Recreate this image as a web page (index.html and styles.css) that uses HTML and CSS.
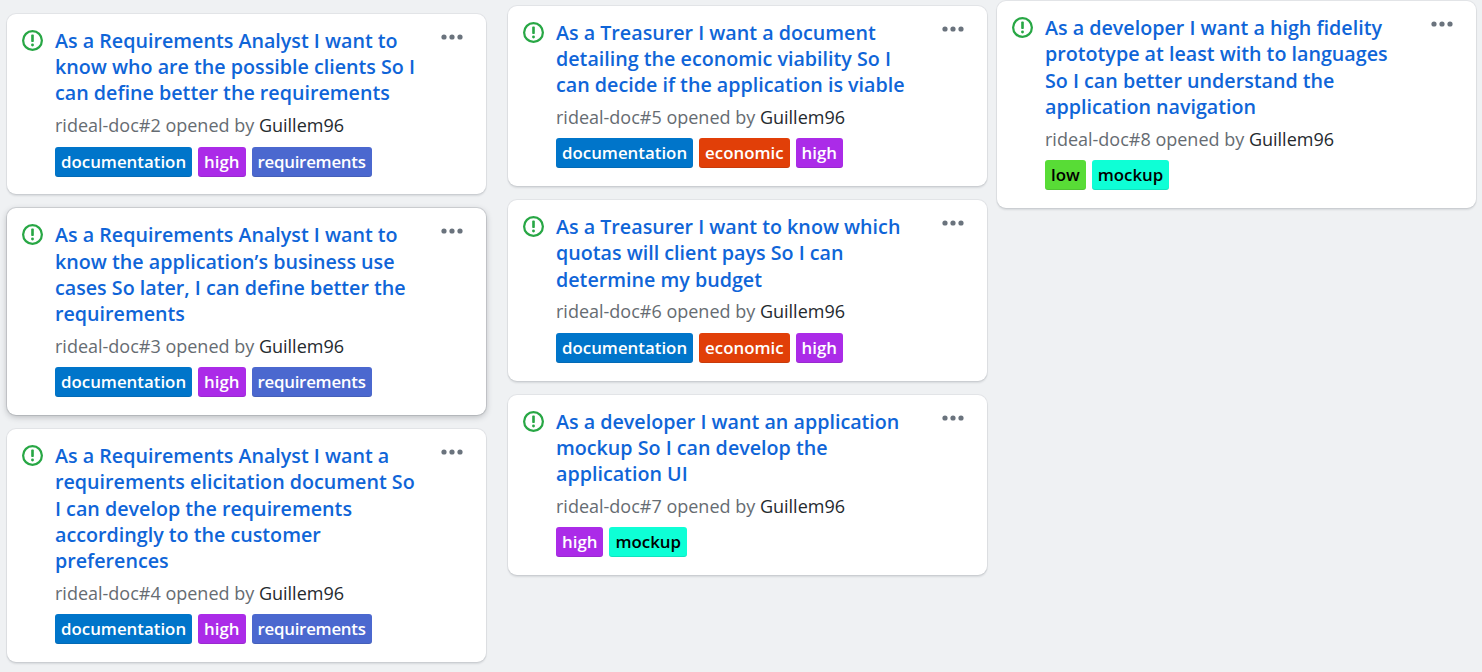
FILE: index.html
```html
<!DOCTYPE html>
<html lang="en">
<head>
    <meta charset="UTF-8">
    <title>Project board</title>
    <link rel="stylesheet" href="styles.css">
</head>
<body>
    <svg width="0" height="0" class="defs">
        <symbol id="issue-open" viewBox="0 0 16 16">
            <circle cx="8" cy="8" r="7.15" fill="none" stroke="#28a745" stroke-width="1.7"/>
            <rect x="7" y="3.5" width="2" height="5.7" rx="0.6" fill="#28a745"/>
            <circle cx="8" cy="11.4" r="1.1" fill="#28a745"/>
        </symbol>
        <symbol id="kebab" viewBox="0 0 22 6">
            <circle cx="3" cy="3" r="2.6" fill="#6a737d"/>
            <circle cx="11" cy="3" r="2.6" fill="#6a737d"/>
            <circle cx="19" cy="3" r="2.6" fill="#6a737d"/>
        </symbol>
    </svg>

    <div class="board">
        <div class="column column-first">
            <div class="card">
                <svg class="icon"><use href="#issue-open"/></svg>
                <div class="card-body">
                    <a class="title" href="#">As a Requirements Analyst I want to know who are the possible clients So I can define better the requirements</a>
                    <div class="meta">rideal-doc#2 opened by <span class="author">Guillem96</span></div>
                    <div class="labels">
                        <span class="label documentation">documentation</span>
                        <span class="label high">high</span>
                        <span class="label requirements">requirements</span>
                    </div>
                </div>
                <svg class="menu"><use href="#kebab"/></svg>
            </div>
            <div class="card card-hover">
                <svg class="icon"><use href="#issue-open"/></svg>
                <div class="card-body">
                    <a class="title" href="#">As a Requirements Analyst I want to know the application’s business use cases So later, I can define better the requirements</a>
                    <div class="meta">rideal-doc#3 opened by <span class="author">Guillem96</span></div>
                    <div class="labels">
                        <span class="label documentation">documentation</span>
                        <span class="label high">high</span>
                        <span class="label requirements">requirements</span>
                    </div>
                </div>
                <svg class="menu"><use href="#kebab"/></svg>
            </div>
            <div class="card">
                <svg class="icon"><use href="#issue-open"/></svg>
                <div class="card-body">
                    <a class="title" href="#">As a Requirements Analyst I want a requirements elicitation document So I can develop the requirements accordingly to the customer preferences</a>
                    <div class="meta">rideal-doc#4 opened by <span class="author">Guillem96</span></div>
                    <div class="labels">
                        <span class="label documentation">documentation</span>
                        <span class="label high">high</span>
                        <span class="label requirements">requirements</span>
                    </div>
                </div>
                <svg class="menu"><use href="#kebab"/></svg>
            </div>
        </div>

        <div class="column column-second">
            <div class="card">
                <svg class="icon"><use href="#issue-open"/></svg>
                <div class="card-body">
                    <a class="title" href="#">As a Treasurer I want a document detailing the economic viability So I can decide if the application is viable</a>
                    <div class="meta">rideal-doc#5 opened by <span class="author">Guillem96</span></div>
                    <div class="labels">
                        <span class="label documentation">documentation</span>
                        <span class="label economic">economic</span>
                        <span class="label high">high</span>
                    </div>
                </div>
                <svg class="menu"><use href="#kebab"/></svg>
            </div>
            <div class="card">
                <svg class="icon"><use href="#issue-open"/></svg>
                <div class="card-body">
                    <a class="title" href="#">As a Treasurer I want to know which quotas will client pays So I can determine my budget</a>
                    <div class="meta">rideal-doc#6 opened by <span class="author">Guillem96</span></div>
                    <div class="labels">
                        <span class="label documentation">documentation</span>
                        <span class="label economic">economic</span>
                        <span class="label high">high</span>
                    </div>
                </div>
                <svg class="menu"><use href="#kebab"/></svg>
            </div>
            <div class="card">
                <svg class="icon"><use href="#issue-open"/></svg>
                <div class="card-body">
                    <a class="title" href="#">As a developer I want an application mockup So I can develop the application UI</a>
                    <div class="meta">rideal-doc#7 opened by <span class="author">Guillem96</span></div>
                    <div class="labels">
                        <span class="label high">high</span>
                        <span class="label mockup">mockup</span>
                    </div>
                </div>
                <svg class="menu"><use href="#kebab"/></svg>
            </div>
        </div>

        <div class="column column-third">
            <div class="card">
                <svg class="icon"><use href="#issue-open"/></svg>
                <div class="card-body">
                    <a class="title" href="#">As a developer I want a high fidelity prototype at least with to languages So I can better understand the application navigation</a>
                    <div class="meta">rideal-doc#8 opened by <span class="author">Guillem96</span></div>
                    <div class="labels">
                        <span class="label low">low</span>
                        <span class="label mockup">mockup</span>
                    </div>
                </div>
                <svg class="menu"><use href="#kebab"/></svg>
            </div>
        </div>
    </div>
</body>
</html>
```

FILE: styles.css
```css
html, body {
    height: 100%;
}
body {
    margin: 0;
    overflow: hidden;
    background: #eff1f3;
    font-family: "Open Sans", "Noto Sans", sans-serif;
    color: #24292e;
}
.defs {
    position: absolute;
}
.board {
    display: flex;
    align-items: flex-start;
    padding-left: 7px;
}
.column {
    display: flex;
    flex-direction: column;
    gap: 14px;
    width: 479px;
    flex-shrink: 0;
}
.column-first {
    margin-top: 13.8px;
}
.column-second {
    margin-top: 5.5px;
    margin-left: 22px;
}
.column-third {
    margin-top: 1px;
    margin-left: 10px;
}
.card {
    display: flex;
    align-items: flex-start;
    background: #ffffff;
    border-radius: 9px;
    box-shadow: 0 0 0 1px rgba(36, 41, 46, 0.06), 0 2px 2px rgba(36, 41, 46, 0.12);
    padding: 14px 23px 17.85px 15px;
}
.card-hover {
    box-shadow: 0 0 0 1px rgba(36, 41, 46, 0.12), 0 2px 6px rgba(36, 41, 46, 0.28);
}
.icon {
    width: 21px;
    height: 21px;
    flex-shrink: 0;
    margin-top: 2px;
    margin-right: 12px;
}
.card-body {
    flex: 1;
    min-width: 0;
}
.title {
    display: block;
    font-size: 19.7px;
    line-height: 26.25px;
    font-weight: 600;
    color: #0f65d8;
    text-decoration: none;
}
.meta {
    margin-top: 5.5px;
    font-size: 18px;
    line-height: 26px;
    color: #666c72;
}
.author {
    color: #24292e;
}
.labels {
    display: flex;
    gap: 6px;
    margin-top: 8.5px;
}
.label {
    height: 30px;
    padding: 0 6px;
    border-radius: 3px;
    font-size: 16.85px;
    line-height: 29px;
    font-weight: 600;
    color: #ffffff;
    box-shadow: inset 0 -1px 0 rgba(27, 31, 35, 0.12);
}
.documentation {
    background: #0075ca;
}
.high {
    background: #ab2be8;
}
.requirements {
    background: #4b68cf;
    letter-spacing: -0.25px;
}
.economic {
    background: #e13f08;
}
.low {
    background: #58dc36;
    color: #000000;
}
.mockup {
    background: #0effd6;
    color: #000000;
}
.menu {
    width: 22px;
    height: 6px;
    flex-shrink: 0;
    margin-top: 6px;
    margin-left: 16px;
}
```
